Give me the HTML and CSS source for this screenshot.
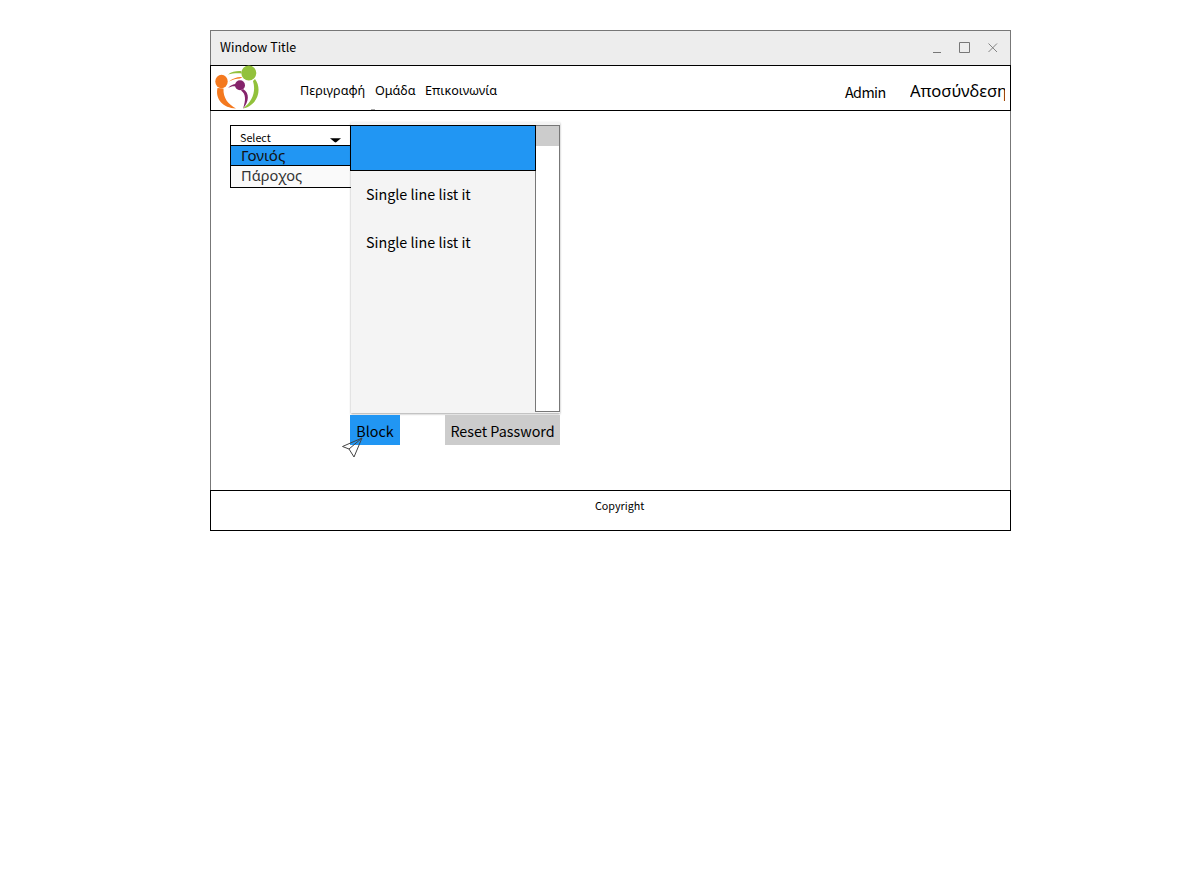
FILE: index.html
```html
<!DOCTYPE html>
<html lang="el">
<head>
<meta charset="utf-8">
<title>Window Title</title>
<link rel="stylesheet" href="styles.css">
</head>
<body>
<div class="window">
  <div class="titlebar">
    <span class="title">Window Title</span>
    <svg class="controls" width="66" height="12" viewBox="0 0 66 12" fill="none" stroke="#777">
      <path d="M0 10.500H8M26.500 .5h10v10h-10z"/>
      <path d="M55.500 1.500l8.500 8.500M64 1.500L55.500 10" stroke-width=".9"/>
    </svg>
  </div>
  <header class="header">
    <svg class="logo" width="46" height="46" viewBox="0 0 46 46">
      <path fill="#f4791f" d="M2.500 23C0 34 8 43 21 43.500C13 39 8 33 8.500 23.500ZM14 16.500C18 13 23 11.500 27.500 12L25 13.500C21 13.500 18 14.500 14 16.500Z"/>
      <path fill="#92c13b" d="M40 14C47 23 44 40 28 43.500C38 36 41 26 38 16ZM13 9.500C17 6.500 22 5.800 26.500 6.200L26.500 8.500C22 8 17 8.500 13 9.500Z"/>
      <path fill="#85246b" d="M28 24C35 28 34 37 28 43.500C31 35 31 29 26 25.500ZM13 23C16 20 18 19 21 19L21 21.500C18 21 16 21.500 13 23Z"/>
      <ellipse cx="6.500" cy="16.500" rx="6.200" ry="6.700" fill="#f4791f"/>
      <circle cx="33.800" cy="8" r="7.500" fill="#92c13b"/>
      <circle cx="25" cy="20.200" r="5" fill="#85246b"/>
    </svg>
    <nav class="nav">
      <span class="nav-item describe">Περιγραφή</span>
      <span class="nav-item team">Ομάδα</span>
      <span class="nav-item">Επικοινωνία</span>
    </nav>
    <span class="user">Admin</span>
    <span class="logout">Αποσύνδεση</span>
    <span class="speck"></span>
  </header>
  <main class="main">
    <div class="dropdown">
      <div class="select"><span>Select</span>
        <svg width="11" height="5" viewBox="0 0 11 5"><path d="M0 .3H11L6.500 4Q5.500 4.800 4.500 4Z"/></svg>
      </div>
      <div class="option active">Γονιός</div>
      <div class="option">Πάροχος</div>
    </div>
    <div class="column">
      <div class="panel">
        <div class="list">
          <div class="list-head"></div>
          <div class="list-item">Single line list it</div>
          <div class="list-item">Single line list it</div>
        </div>
        <div class="scroll"><div class="thumb"></div></div>
      </div>
      <div class="actions">
        <div class="button block">Block
          <svg class="pointer" width="22" height="22" viewBox="0 0 22 22" stroke="#444" fill="none" stroke-linejoin="round">
            <path d="M20 1L.5 9.500L7 12L12 20Z"/><path d="M20 1L7 12"/>
          </svg>
        </div>
        <div class="button reset">Reset Password</div>
      </div>
    </div>
  </main>
  <footer class="footer">Copyright</footer>
</div>
</body>
</html>
```
FILE: styles.css
```css
* { box-sizing: border-box; }
body {
  margin: 0;
  padding: 30px 0 0 210px;
  background: #fff;
  color: #000;
  font-family: "Noto Sans CJK SC", "Noto Sans", sans-serif;
}
.window { width: 801px; white-space: nowrap; }
.titlebar {
  display: flex;
  justify-content: space-between;
  height: 35px;
  padding: 0 11px 0 9px;
  border: 1px solid #777;
  border-bottom: 0;
  background: #ededed;
  font-size: 12.5px;
  line-height: 32px;
}
.controls { margin-top: 11px; }
.header {
  position: relative;
  display: flex;
  height: 46px;
  border: 1px solid #000;
}
.logo { flex: none; margin: -1px 0 0 4px; }
.nav {
  display: flex;
  flex: none;
  width: 584px;
  padding-left: 39px;
  font-family: "Noto Sans", sans-serif;
  font-size: 12.6px;
  line-height: 49px;
}
.describe { width: 75px; }
.team { width: 50px; }
.user {
  flex: none;
  width: 65px;
  font-size: 14.33px;
  letter-spacing: -.6px;
  line-height: 51px;
}
.logout {
  flex: none;
  width: 95px;
  overflow: hidden;
  font-family: "Noto Sans", sans-serif;
  font-size: 16.6px;
  line-height: 49px;
}
.speck {
  position: absolute;
  left: 160px;
  bottom: 0;
  width: 4px;
  height: 1px;
  background: #aaa;
}
.main {
  display: flex;
  height: 379px;
  padding: 11px 0 0 19px;
  border: solid #777;
  border-width: 0 1px;
}
.dropdown {
  width: 121px;
  height: 63px;
  margin: 3px -1px 0 0;
  border: 1px solid #000;
  border-right: 0;
}
.select {
  display: flex;
  justify-content: space-between;
  height: 19px;
  padding: 0 10px 0 9px;
  font-size: 10.75px;
  line-height: 23px;
}
.select svg { margin-top: 12px; }
.option {
  height: 21px;
  padding-left: 10px;
  background: #fafafa;
  color: #333;
  font-family: "Noto Sans", sans-serif;
  font-size: 14.6px;
  line-height: 19px;
}
.option.active {
  border: solid #000;
  border-width: 1px 0;
  background: #2196f3;
  color: #111;
  font-size: 15.1px;
}
.column { width: 210px; }
.panel {
  display: flex;
  height: 291px;
  margin-left: 1px;
  padding-top: 3px;
  background: #f4f4f4;
  box-shadow: 0 1px 2px rgba(0, 0, 0, .35);
}
.list { width: 184px; }
.list-head {
  position: relative;
  width: 186px;
  height: 46px;
  margin-left: -1px;
  border: 1px solid #000;
  background: #2196f3;
}
.list-item {
  height: 48px;
  padding-left: 15px;
  font-size: 14.33px;
  line-height: 45px;
}
.scroll {
  width: 25px;
  height: 287px;
  border: 1px solid #777;
  background: #fff;
}
.thumb { height: 20px; background: #ccc; }
.actions {
  display: flex;
  justify-content: space-between;
  margin-top: 2px;
}
.button {
  position: relative;
  height: 30px;
  background: #ccc;
  font-size: 14.33px;
  line-height: 31px;
  text-align: center;
}
.block {
  width: 50px;
  background: #2196f3;
}
.reset { width: 115px; }
.pointer {
  position: absolute;
  left: -8px;
  top: 22px;
}
.footer {
  height: 41px;
  padding-left: 384px;
  border: 1px solid #000;
  font-size: 10.75px;
  line-height: 30px;
}
```
